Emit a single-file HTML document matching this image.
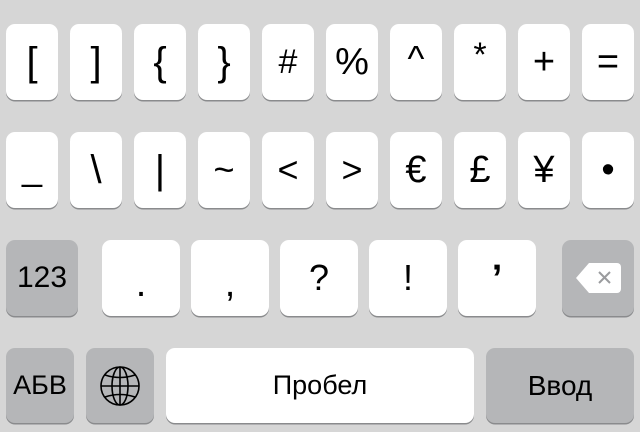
<!DOCTYPE html>
<html><head><meta charset="utf-8"><style>
html,body{margin:0;padding:0}
body{width:640px;height:432px;background:#d6d6d6;position:relative;overflow:hidden;font-family:"Liberation Sans","DejaVu Sans",sans-serif;color:#000}
.k{position:absolute;background:#fff;border-radius:9px;box-shadow:0 1.5px 0 #8a8b8d;display:flex;align-items:center;justify-content:center;font-size:36px;line-height:1;box-sizing:border-box}
.g{background:#b5b6b8}
.r1{top:24px;height:76px}
.r2{top:132px;height:76px}
.r3{top:240px;height:76px}
.r4{top:348px;height:75px}
.w{width:52px}
.w3{width:78px}
</style></head><body>
<div class="k r1 w" style="left:6px;font-size:40px">[</div>
<div class="k r1 w" style="left:70px;font-size:40px">]</div>
<div class="k r1 w" style="left:134px;font-size:40px">{</div>
<div class="k r1 w" style="left:198px;font-size:40px">}</div>
<div class="k r1 w" style="left:262px;font-size:34px">#</div>
<div class="k r1 w" style="left:326px;font-size:38px">%</div>
<div class="k r1 w" style="left:390px;font-size:36px;padding-bottom:6px">^</div>
<div class="k r1 w" style="left:454px;font-size:34px;padding-bottom:14px">*</div>
<div class="k r1 w" style="left:518px;font-size:38px">+</div>
<div class="k r1 w" style="left:582px;font-size:38px">=</div>

<div class="k r2 w" style="left:6px;padding-bottom:4px">_</div>
<div class="k r2 w" style="left:70px;font-size:40px">\</div>
<div class="k r2 w" style="left:134px;font-size:40px">|</div>
<div class="k r2 w" style="left:198px">~</div>
<div class="k r2 w" style="left:262px">&lt;</div>
<div class="k r2 w" style="left:326px">&gt;</div>
<div class="k r2 w" style="left:390px;font-size:38px">€</div>
<div class="k r2 w" style="left:454px;font-size:38px">£</div>
<div class="k r2 w" style="left:518px;font-size:38px">¥</div>
<div class="k r2 w" style="left:582px;font-size:38px">•</div>

<div class="k r3 g" style="left:6px;width:72px;font-size:30px">123</div>
<div class="k r3 w3" style="left:102px;padding-top:12px;font-size:38px">.</div>
<div class="k r3 w3" style="left:191px;padding-top:12px;font-size:38px">,</div>
<div class="k r3 w3" style="left:280px">?</div>
<div class="k r3 w3" style="left:369px">!</div>
<div class="k r3 w3" style="left:458px;padding-top:2px;font-weight:bold;font-size:38px">’</div>
<div class="k r3 g" style="left:562px;width:72px">
<svg width="46" height="32" viewBox="0 0 46 32"><path d="M14 1 H42 a4 4 0 0 1 4 4 V27 a4 4 0 0 1 -4 4 H14 L1 16 Z" fill="#fff"/><path d="M24 10 L35 21 M35 10 L24 21" stroke="#9a9b9e" stroke-width="2"/></svg></div>

<div class="k r4 g" style="left:6px;width:68px;font-size:27px">АБВ</div>
<div class="k r4 g" style="left:86px;width:68px">
<svg width="42" height="42" viewBox="0 0 42 42" fill="none" stroke="#000" stroke-width="1.6"><circle cx="21" cy="21" r="19"/><ellipse cx="21" cy="21" rx="8" ry="19"/><line x1="21" y1="2" x2="21" y2="40"/><line x1="2" y1="21" x2="40" y2="21"/><path d="M6 10 Q21 15 36 10 M6 32 Q21 27 36 32"/></svg></div>
<div class="k r4" style="left:166px;width:308px;font-size:27px">Пробел</div>
<div class="k r4 g" style="left:486px;width:148px;font-size:28px">Ввод</div>
</body></html>
